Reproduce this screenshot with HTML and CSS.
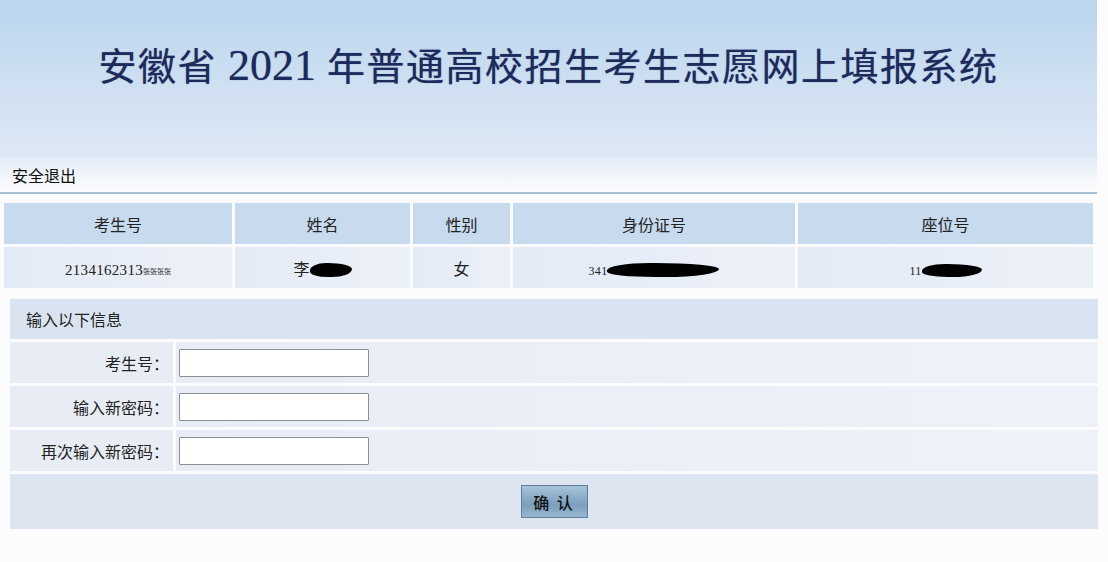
FILE: index.html
```html
<!DOCTYPE html>
<html lang="zh-CN">
<head>
<meta charset="utf-8">
<title>安徽省2021年普通高校招生考生志愿网上填报系统</title>
<link rel="stylesheet" href="styles.css">
</head>
<body>
<div class="page">
  <header class="banner">
    <h1 class="title">安徽省<span class="num"> 2021 </span>年普通高校招生考生志愿网上填报系统</h1>
  </header>
  <nav class="nav"><a class="logout" href="#">安全退出</a></nav>

  <table class="info">
    <thead>
      <tr>
        <th class="c1">考生号</th>
        <th class="c2">姓名</th>
        <th class="c3">性别</th>
        <th class="c4">身份证号</th>
        <th class="c5">座位号</th>
      </tr>
    </thead>
    <tbody>
      <tr>
        <td><span class="digits">2134162313</span><span class="tiny">张张张张</span></td>
        <td>李<span class="blot blot-name"></span></td>
        <td>女</td>
        <td><span class="digits small">341</span><span class="blot blot-id"></span></td>
        <td><span class="digits small">11</span><span class="blot blot-seat"></span></td>
      </tr>
    </tbody>
  </table>

  <form class="pwd">
    <div class="pwd-head">输入以下信息</div>
    <label class="lbl" for="ksh">考生号：</label>
    <div class="fld"><input id="ksh" class="txt" type="text"></div>
    <label class="lbl" for="np1">输入新密码：</label>
    <div class="fld"><input id="np1" class="txt" type="password"></div>
    <label class="lbl" for="np2">再次输入新密码：</label>
    <div class="fld"><input id="np2" class="txt" type="password"></div>
    <div class="actions"><button class="btn" type="button">确 认</button></div>
  </form>
</div>
</body>
</html>
```

FILE: styles.css
```css
html, body {
  margin: 0;
  padding: 0;
  background: #fcfcfe;
}
body {
  font-family: "Noto Sans CJK SC", "Liberation Sans", sans-serif;
  font-size: 16px;
  color: #222;
}
.page {
  width: 1097px;
}
.banner {
  height: 157px;
  background: linear-gradient(180deg, #bad5ed 0%, #cfe0f2 55%, #dde8f5 100%);
  box-sizing: border-box;
  padding-top: 36px;
}
.title {
  margin: 0;
  text-align: center;
  font-family: "Noto Sans CJK SC", sans-serif;
  font-weight: 400;
  font-size: 38px;
  letter-spacing: 1.5px;
  line-height: 56px;
  color: #1d2a5c;
  text-shadow: 0 0 1px rgba(29, 42, 92, 0.6);
}
.num {
  font-family: "Liberation Serif", serif;
  font-weight: normal;
  font-size: 44px;
  letter-spacing: 0;
}
.nav {
  box-sizing: border-box;
  background: linear-gradient(180deg, #e3ecf7 0%, #f3f6fb 60%, #fafbfd 100%);
  border-bottom: 2px solid #a7bdd3;
  height: 37px;
  padding-left: 12px;
  display: flex;
  align-items: center;
}
.logout {
  color: #111;
  text-decoration: none;
  font-size: 16px;
}
.info {
  margin: 6px 0 0 1px;
  border-collapse: separate;
  border-spacing: 3px;
  table-layout: fixed;
  width: 1095px;
}
.info th, .info td {
  height: 41px;
  padding: 0;
  text-align: center;
  vertical-align: middle;
  font-weight: normal;
  font-size: 16px;
  color: #222;
}
.info th {
  background: #c7daee;
}
.info td {
  background: linear-gradient(90deg, #e3ebf6 0%, #ecf0f8 100%);
}
.c1 { width: 228px; }
.c2 { width: 175px; }
.c3 { width: 97px; }
.c4 { width: 282px; }
.c5 { width: 295px; }
.digits {
  font-family: "Liberation Serif", serif;
  font-size: 15px;
  letter-spacing: 0.3px;
}
.digits.small {
  font-size: 12px;
}
.tiny {
  font-size: 7px;
  vertical-align: 1px;
}
.blot {
  display: inline-block;
  background: #000;
  vertical-align: middle;
  border-radius: 40% 60% 50% 45% / 55% 45% 60% 40%;
}
.blot-name { width: 42px; height: 14px; }
.blot-id { width: 112px; height: 14px; }
.blot-seat { width: 60px; height: 13px; }

.pwd {
  margin: 8px 0 0 10px;
  width: 1088px;
  display: grid;
  grid-template-columns: 163px 1fr;
  grid-template-rows: 40px 41px 41px 41px 55px;
  gap: 3px;
}
.pwd-head {
  grid-column: 1 / -1;
  background: #dae4f1;
  display: flex;
  align-items: center;
  padding-left: 16px;
  font-size: 16px;
}
.lbl {
  background: #e8edf5;
  display: flex;
  align-items: center;
  justify-content: flex-end;
  padding-right: 4px;
  font-size: 16px;
}
.fld {
  background: linear-gradient(90deg, #e8edf5 0%, #eef1f8 100%);
  display: flex;
  align-items: center;
  padding-left: 3px;
}
.txt {
  width: 190px;
  height: 28px;
  box-sizing: border-box;
  border: 1px solid #8a8f96;
  border-radius: 1px;
  background: #fff;
  margin: 0;
  padding: 0 4px;
}
.actions {
  grid-column: 1 / -1;
  background: #dce5f0;
  display: flex;
  align-items: center;
  justify-content: center;
}
.btn {
  width: 67px;
  height: 33px;
  margin: 0;
  padding: 0;
  border: 1px solid #5d7f9c;
  background: linear-gradient(180deg, #a9c4da 0%, #86a8c4 45%, #7b9fbd 60%, #98b6cf 100%);
  font-family: "Noto Sans CJK SC", sans-serif;
  font-size: 16px;
  font-weight: 500;
  color: #111;
  letter-spacing: 2px;
}
```
